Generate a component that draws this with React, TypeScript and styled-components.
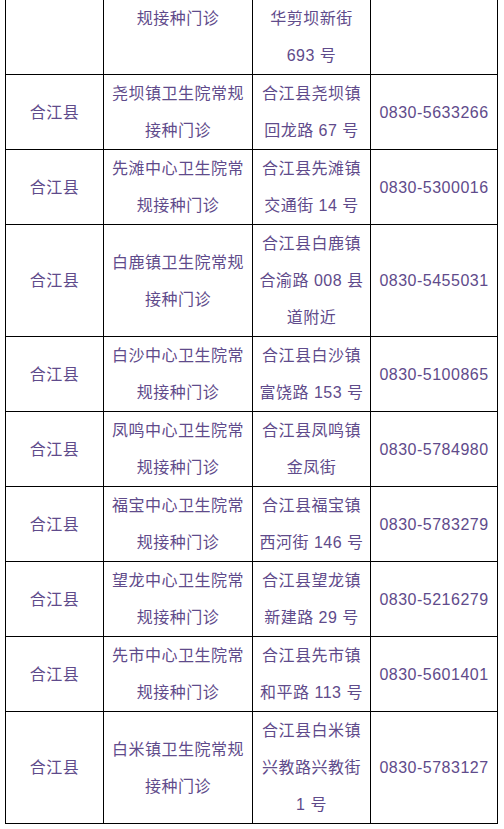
import styled, { createGlobalStyle } from "styled-components";

type Clinic = {
  county: string;
  name: string[];
  address: string[];
  phone: string;
};

// lines scrolled above the top edge are kept blank so the row keeps its height
const HIDDEN = "\u00a0";

const clinics: Clinic[] = [
  {
    county: "",
    name: [HIDDEN, "规接种门诊"],
    address: [HIDDEN, HIDDEN, "华剪坝新街", "693 号"],
    phone: "",
  },
  {
    county: "合江县",
    name: ["尧坝镇卫生院常规", "接种门诊"],
    address: ["合江县尧坝镇", "回龙路 67 号"],
    phone: "0830-5633266",
  },
  {
    county: "合江县",
    name: ["先滩中心卫生院常", "规接种门诊"],
    address: ["合江县先滩镇", "交通街 14 号"],
    phone: "0830-5300016",
  },
  {
    county: "合江县",
    name: ["白鹿镇卫生院常规", "接种门诊"],
    address: ["合江县白鹿镇", "合渝路 008 县", "道附近"],
    phone: "0830-5455031",
  },
  {
    county: "合江县",
    name: ["白沙中心卫生院常", "规接种门诊"],
    address: ["合江县白沙镇", "富饶路 153 号"],
    phone: "0830-5100865",
  },
  {
    county: "合江县",
    name: ["凤鸣中心卫生院常", "规接种门诊"],
    address: ["合江县凤鸣镇", "金凤街"],
    phone: "0830-5784980",
  },
  {
    county: "合江县",
    name: ["福宝中心卫生院常", "规接种门诊"],
    address: ["合江县福宝镇", "西河街 146 号"],
    phone: "0830-5783279",
  },
  {
    county: "合江县",
    name: ["望龙中心卫生院常", "规接种门诊"],
    address: ["合江县望龙镇", "新建路 29 号"],
    phone: "0830-5216279",
  },
  {
    county: "合江县",
    name: ["先市中心卫生院常", "规接种门诊"],
    address: ["合江县先市镇", "和平路 113 号"],
    phone: "0830-5601401",
  },
  {
    county: "合江县",
    name: ["白米镇卫生院常规", "接种门诊"],
    address: ["合江县白米镇", "兴教路兴教街", "1 号"],
    phone: "0830-5783127",
  },
];

function Lines({ items }: { items: string[] }) {
  return (
    <>
      {items.map((line, i) => (
        <Line key={i}>{line}</Line>
      ))}
    </>
  );
}

export default function App() {
  return (
    <>
      <GlobalStyle />
      <Page>
        <Table>
          <colgroup>
            <Col $width={98} />
            <Col $width={149} />
            <Col $width={118} />
            <Col $width={127} />
          </colgroup>
          <tbody>
            {clinics.map((c, i) => (
              <tr key={i}>
                <Cell>{c.county}</Cell>
                <Cell>
                  <Lines items={c.name} />
                </Cell>
                <Cell>
                  <Lines items={c.address} />
                </Cell>
                <Cell>{c.phone}</Cell>
              </tr>
            ))}
          </tbody>
        </Table>
      </Page>
    </>
  );
}

const GlobalStyle = createGlobalStyle`
  html, body {
    margin: 0;
    padding: 0;
    background: #ffffff;
    overflow: hidden;
  }
`;

const Page = styled.div`
  height: 829px;
  overflow: hidden;
  padding-left: 5px;
`;

// the page is scrolled so that the first row is cut off at the top
const Table = styled.table`
  margin-top: -75px;
  border-collapse: collapse;
  table-layout: fixed;
  width: 493px;
  font-family: "Liberation Sans", "Noto Sans CJK SC", sans-serif;
  font-size: 16px;
  letter-spacing: 0.5px;
  color: #5f4b8b;
`;

const Col = styled.col<{ $width: number }>`
  width: ${({ $width }) => $width}px;
`;

const Cell = styled.td`
  border: 1px solid #000000;
  padding: 0 4px;
  line-height: 37px;
  text-align: center;
  vertical-align: middle;
  white-space: nowrap;
  overflow: hidden;
`;

const Line = styled.span`
  display: block;
  height: 37px;
`;
